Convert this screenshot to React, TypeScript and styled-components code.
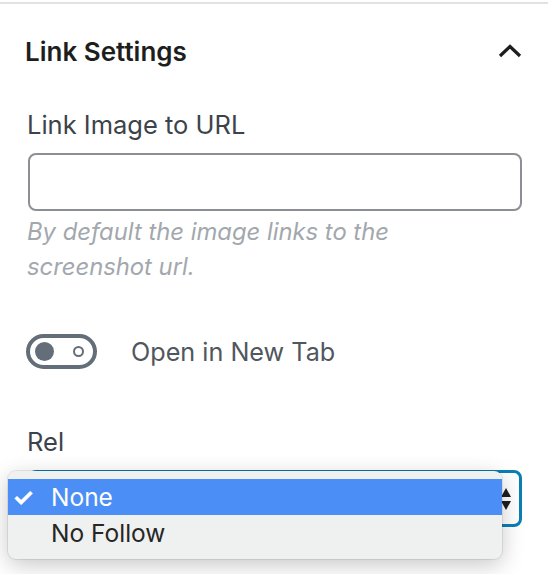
import React from 'react';
import styled, { createGlobalStyle } from 'styled-components';

const GlobalStyle = createGlobalStyle`
  html, body {
    margin: 0;
    padding: 0;
    background: #fff;
  }
  body {
    font-family: Inter, "Noto Sans", sans-serif;
    -webkit-font-smoothing: antialiased;
  }
`;

const Panel = styled.div`
  position: relative;
  width: 548px;
  height: 574px;
  margin-top: 2px;
  border-top: 2px solid #e2e2e2;
  box-sizing: border-box;
  overflow: hidden;
`;

const Header = styled.div`
  display: flex;
  align-items: center;
  justify-content: space-between;
  height: 94px;
  padding: 0 26px 0 25px;
`;

const Title = styled.h2`
  margin: 0;
  font-size: 26px;
  font-weight: 600;
  color: #1e1e1e;
`;

const Body = styled.div`
  display: flex;
  flex-direction: column;
  padding: 12px 26px 0 28px;
`;

const Label = styled.label`
  font-size: 25.5px;
  color: #3c434a;
  line-height: 30px;
  margin-left: -1px;
`;

const TextInput = styled.div`
  margin-top: 13px;
  height: 58px;
  border: 2px solid #8c8f94;
  border-radius: 8px;
  box-sizing: border-box;
`;

const Help = styled.p`
  margin: 3px 0 0 -1px;
  font-size: 23.8px;
  font-style: italic;
  line-height: 35px;
  color: #a2a8ad;
  width: 400px;
`;

const ToggleRow = styled.div`
  display: flex;
  align-items: center;
  gap: 34px;
  margin-top: 50px;
  margin-left: -2px;
`;

const Toggle = styled.div`
  width: 71px;
  height: 35px;
  border: 4px solid #646e78;
  border-radius: 18px;
  box-sizing: border-box;
  display: flex;
  align-items: center;
  justify-content: space-between;
  padding: 0 9px 0 5px;
`;

const Knob = styled.span`
  width: 19px;
  height: 19px;
  border-radius: 50%;
  background: #646e78;
`;

const Ring = styled.span`
  width: 7px;
  height: 7px;
  border-radius: 50%;
  border: 2px solid #646e78;
`;

const ToggleLabel = styled.span`
  font-size: 25.2px;
  color: #50575e;
`;

const RelLabel = styled(Label)`
  margin-top: 58px;
`;

const Select = styled.div`
  margin-top: 13px;
  height: 57px;
  border: 3px solid #0a7fb5;
  border-radius: 8px;
  box-sizing: border-box;
  display: flex;
  align-items: center;
  justify-content: flex-end;
  padding-right: 7px;
`;

const Arrows = styled.svg`
  width: 12px;
  height: 24px;
`;

const Menu = styled.ul`
  position: absolute;
  left: 8px;
  top: 467px;
  width: 494px;
  margin: 0;
  padding: 8px 0;
  list-style: none;
  background: #eff0f0;
  border-radius: 8px;
  box-shadow: 0 0 0 1px rgba(0, 0, 0, 0.08), 0 6px 22px rgba(0, 0, 0, 0.22);
`;

const Option = styled.li<{ $active?: boolean }>`
  display: flex;
  align-items: center;
  height: 36px;
  padding-left: 43px;
  position: relative;
  font-size: 24.5px;
  color: ${p => (p.$active ? '#fff' : '#262626')};
  background: ${p => (p.$active ? '#4b8ef6' : 'transparent')};
`;

const Check = styled.span`
  position: absolute;
  left: 4px;
  top: 0;
  font-size: 25px;
  line-height: 36px;
  font-weight: 700;
`;

const Chevron = () => (
  <svg width="24" height="14" viewBox="0 0 24 14" fill="none">
    <path d="M2 12L12 2.5L22 12" stroke="#1e1e1e" strokeWidth="3.2" />
  </svg>
);

const App = () => (
  <>
    <GlobalStyle />
    <Panel>
      <Header>
        <Title>Link Settings</Title>
        <Chevron />
      </Header>
      <Body>
        <Label>Link Image to URL</Label>
        <TextInput />
        <Help>By default the image links to the screenshot url.</Help>
        <ToggleRow>
          <Toggle>
            <Knob />
            <Ring />
          </Toggle>
          <ToggleLabel>Open in New Tab</ToggleLabel>
        </ToggleRow>
        <RelLabel>Rel</RelLabel>
        <Select>
          <Arrows viewBox="0 0 12 24">
            <path d="M6 1L11 10H1Z" fill="#1e1e1e" />
            <path d="M6 23L11 14H1Z" fill="#1e1e1e" />
          </Arrows>
        </Select>
      </Body>
      <Menu>
        <Option $active>
          <Check>✓</Check>
          None
        </Option>
        <Option>No Follow</Option>
      </Menu>
    </Panel>
  </>
);

export default App;
